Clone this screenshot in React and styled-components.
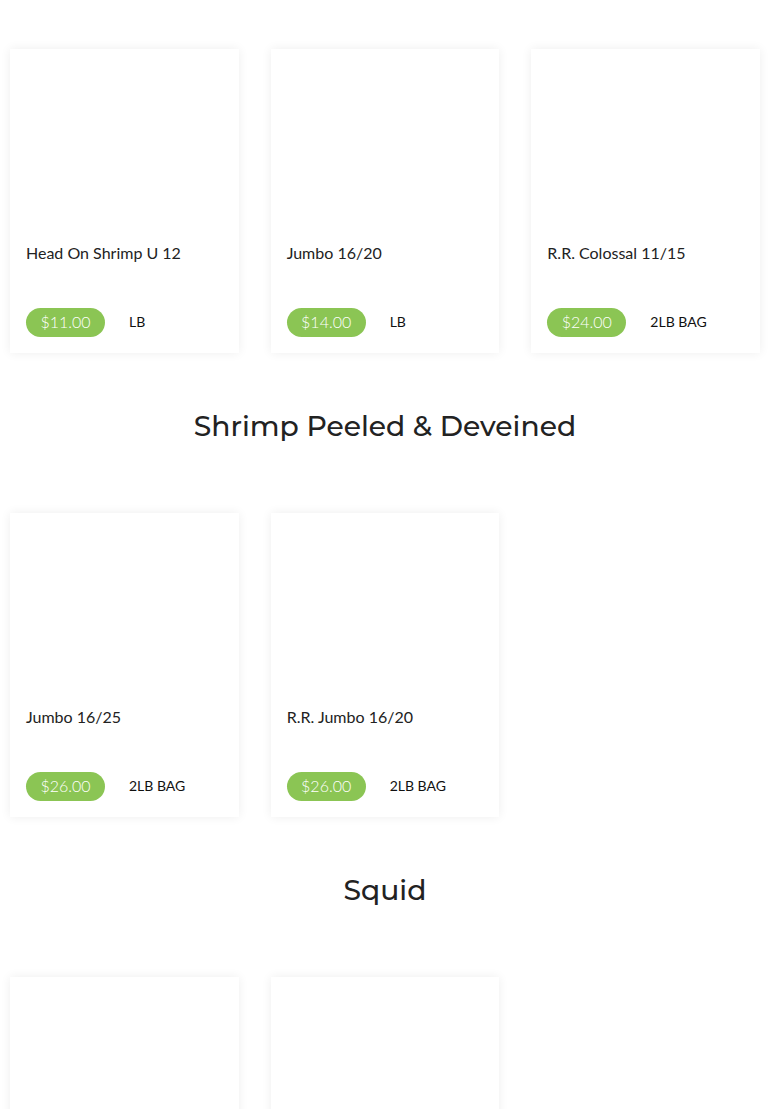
import React from 'react'
import styled, { createGlobalStyle } from 'styled-components'

const GlobalStyle = createGlobalStyle`
    body {
        margin: 0;
        background: #fff;
        font-family: Lato, 'Liberation Sans', sans-serif;
    }
`

const Page = styled.div`
    padding: 49px 10px 0;
`

const Grid = styled.div`
    display: grid;
    grid-template-columns: repeat(3, 1fr);
    column-gap: 32px;
`

const Heading = styled.h2`
    margin: 0;
    padding: 54px 0 68px;
    text-align: center;
    font-family: Montserrat, 'Open Sans', sans-serif;
    font-weight: 500;
    font-size: 28.2px;
    line-height: 38px;
    color: #222;
`

const Card = styled.div`
    background: #fff;
    box-shadow: 0 0 10px rgba(0, 0, 0, 0.07);
    padding: 16px;
    display: flex;
    flex-direction: column;
`

const Picture = styled.div`
    height: 176px;
`

const Name = styled.div`
    font-size: 16px;
    line-height: 24px;
    color: #222;
    height: 67px;
`

const PriceRow = styled.div`
    display: flex;
    align-items: center;
    gap: 24px;
`

const Price = styled.span`
    background: #8bc554;
    color: #fff;
    border-radius: 15px;
    height: 29px;
    width: 79px;
    box-sizing: border-box;
    padding-bottom: 3px;
    display: flex;
    align-items: center;
    justify-content: center;
    font-size: 16px;
    font-weight: 300;
`

const Unit = styled.span`
    font-size: 14px;
    color: #111;
    margin-bottom: 3px;
`

const sections = [
    {
        title: null,
        items: [
            { name: 'Head On Shrimp U 12', price: '$11.00', unit: 'LB' },
            { name: 'Jumbo 16/20', price: '$14.00', unit: 'LB' },
            { name: 'R.R. Colossal 11/15', price: '$24.00', unit: '2LB BAG' },
        ],
    },
    {
        title: 'Shrimp Peeled & Deveined',
        items: [
            { name: 'Jumbo 16/25', price: '$26.00', unit: '2LB BAG' },
            { name: 'R.R. Jumbo 16/20', price: '$26.00', unit: '2LB BAG' },
        ],
    },
    {
        title: 'Squid',
        items: [
            { name: '', price: '', unit: '' },
            { name: '', price: '', unit: '' },
        ],
    },
]

function ProductCard({ item }) {
    return (
        <Card>
            <Picture />
            <Name>{item.name}</Name>
            <PriceRow>
                {item.price && <Price>{item.price}</Price>}
                <Unit>{item.unit}</Unit>
            </PriceRow>
        </Card>
    )
}

export default function App() {
    return (
        <Page>
            <GlobalStyle />
            {sections.map((section, i) => (
                <React.Fragment key={i}>
                    {section.title && <Heading>{section.title}</Heading>}
                    <Grid>
                        {section.items.map((item, j) => (
                            <ProductCard key={j} item={item} />
                        ))}
                    </Grid>
                </React.Fragment>
            ))}
        </Page>
    )
}
